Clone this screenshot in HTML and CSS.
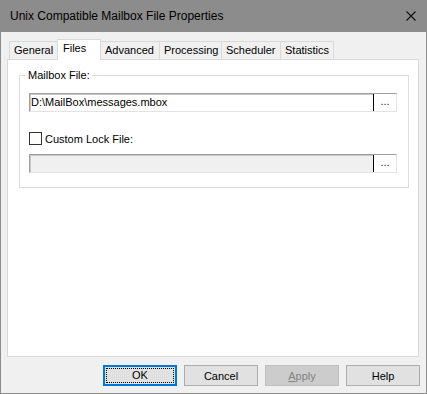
FILE: index.html
```html
<!DOCTYPE html>
<html lang="en">

<head>
    <meta charset="UTF-8">
    <title>Unix Compatible Mailbox File Properties</title>
    <link rel="stylesheet" href="styles.css">
</head>

<body>
    <div class="window">
        <div class="titlebar">
            <span class="title">Unix Compatible Mailbox File Properties</span>
            <svg class="close" width="10" height="10" viewBox="0 0 10 10">
                <path d="M0.5 0.5 L9.5 9.5 M9.5 0.5 L0.5 9.5" stroke="#111" stroke-width="1.1" fill="none"/>
            </svg>
        </div>

        <div class="content">
            <div class="tabs">
                <div class="tab tab-general">General</div>
                <div class="tab tab-files active">Files</div>
                <div class="tab tab-advanced">Advanced</div>
                <div class="tab tab-processing">Processing</div>
                <div class="tab tab-scheduler">Scheduler</div>
                <div class="tab tab-statistics last">Statistics</div>
            </div>

            <div class="panel">
                <fieldset class="group">
                    <legend>Mailbox File:</legend>

                    <div class="field">
                        <span class="field-text">D:\MailBox\messages.mbox</span>
                        <span class="browse">...</span>
                    </div>

                    <label class="check-row">
                        <span class="checkbox"></span>
                        <span>Custom Lock File:</span>
                    </label>

                    <div class="field disabled">
                        <span class="field-text"></span>
                        <span class="browse">...</span>
                    </div>
                </fieldset>
            </div>

            <div class="buttons">
                <button class="btn default"><span class="focus">OK</span></button>
                <button class="btn">Cancel</button>
                <button class="btn" disabled><u>A</u>pply</button>
                <button class="btn">Help</button>
            </div>
        </div>
    </div>
</body>

</html>
```

FILE: styles.css
```css
body {
    margin: 0;
    font-family: "Liberation Sans", Arial, sans-serif;
    font-size: 11px;
    color: #000;
    background-color: #f0f0f0;
}

.window {
    width: 427px;
    height: 394px;
    box-sizing: border-box;
    border: 1px solid #8c8c8c;
    border-top: none;
    background-color: #f0f0f0;
    display: flex;
    flex-direction: column;
}

.titlebar {
    height: 31px;
    margin: 0 -1px;
    background-color: #8c8c8c;
    display: flex;
    align-items: center;
    justify-content: space-between;
    padding: 0 11px 1px 10px;
}

.title {
    font-family: "Liberation Sans", Arial, sans-serif;
    font-size: 12px;
    color: #000;
}

.close {
    display: block;
}

.content {
    flex: 1;
    display: flex;
    flex-direction: column;
    padding: 7px 7px 0 6px;
}

.tabs {
    display: flex;
    align-items: flex-end;
    height: 20px;
    padding-left: 2px;
}

.tab {
    box-sizing: border-box;
    height: 18px;
    border-top: 1px solid #d9d9d9;
    border-left: 1px solid #d9d9d9;
    background-color: #f0f0f0;
    line-height: 17px;
    padding-left: 4px;
}

.tab.last {
    border-right: 1px solid #d9d9d9;
}

.tab-general { width: 48px; }
.tab-files { width: 44px; }
.tab-advanced { width: 59px; }
.tab-processing { width: 62px; }
.tab-scheduler { width: 59px; }
.tab-statistics { width: 54px; }

.tab.active {
    height: 21px;
    margin-bottom: -1px;
    background-color: #fff;
    border-right: 1px solid #d9d9d9;
    margin-right: -1px;
    position: relative;
    z-index: 1;
    padding-left: 5px;
    line-height: 16px;
}

.panel {
    box-sizing: border-box;
    height: 298px;
    border: 1px solid #d9d9d9;
    background-color: #fff;
    padding: 0 9px 0 11px;
}

.group {
    margin: 9px 0 0 0;
    border: 1px solid #dcdcdc;
    padding: 11px 11px 14px 9px;
}

.group legend {
    padding: 0 2px;
    margin-left: -3px;
    line-height: 13px;
}

.field {
    display: flex;
    height: 19px;
    box-sizing: border-box;
    border: 1px solid;
    border-color: #a0a0a0 #e3e3e3 #e3e3e3 #a0a0a0;
    box-shadow: inset 1px 1px 0 #c8c8c8;
    background-color: #fff;
}

.field.disabled {
    background-color: #f0f0f0;
}

.field-text {
    flex: 1;
    padding-left: 1px;
    line-height: 17px;
    white-space: nowrap;
}

.browse {
    width: 23px;
    box-sizing: border-box;
    border-left: 1px solid #000;
    background-color: #fff;
    text-align: center;
    line-height: 15px;
    color: #1a1a5a;
}

.check-row {
    display: flex;
    align-items: center;
    gap: 3px;
    margin: 20px 0 9px;
    height: 13px;
}

.checkbox {
    width: 13px;
    height: 13px;
    box-sizing: border-box;
    border: 1px solid #333;
    background-color: #fff;
}

.buttons {
    display: flex;
    justify-content: flex-end;
    gap: 7px;
    margin-top: 8px;
    margin-right: -1px;
}

.btn {
    width: 74px;
    height: 21px;
    box-sizing: border-box;
    border: 1px solid #adadad;
    background-color: #e1e1e1;
    font-family: "Liberation Sans", Arial, sans-serif;
    font-size: 11px;
    color: #000;
    padding: 0;
}

.btn.default {
    border: 2px solid #0078d7;
    padding: 1px;
}

.btn .focus {
    display: block;
    height: 100%;
    box-sizing: border-box;
    border: 1px dotted #000;
    line-height: 13px;
}

.btn:disabled {
    background-color: #cccccc;
    border-color: #bfbfbf;
    color: #838383;
}
```
